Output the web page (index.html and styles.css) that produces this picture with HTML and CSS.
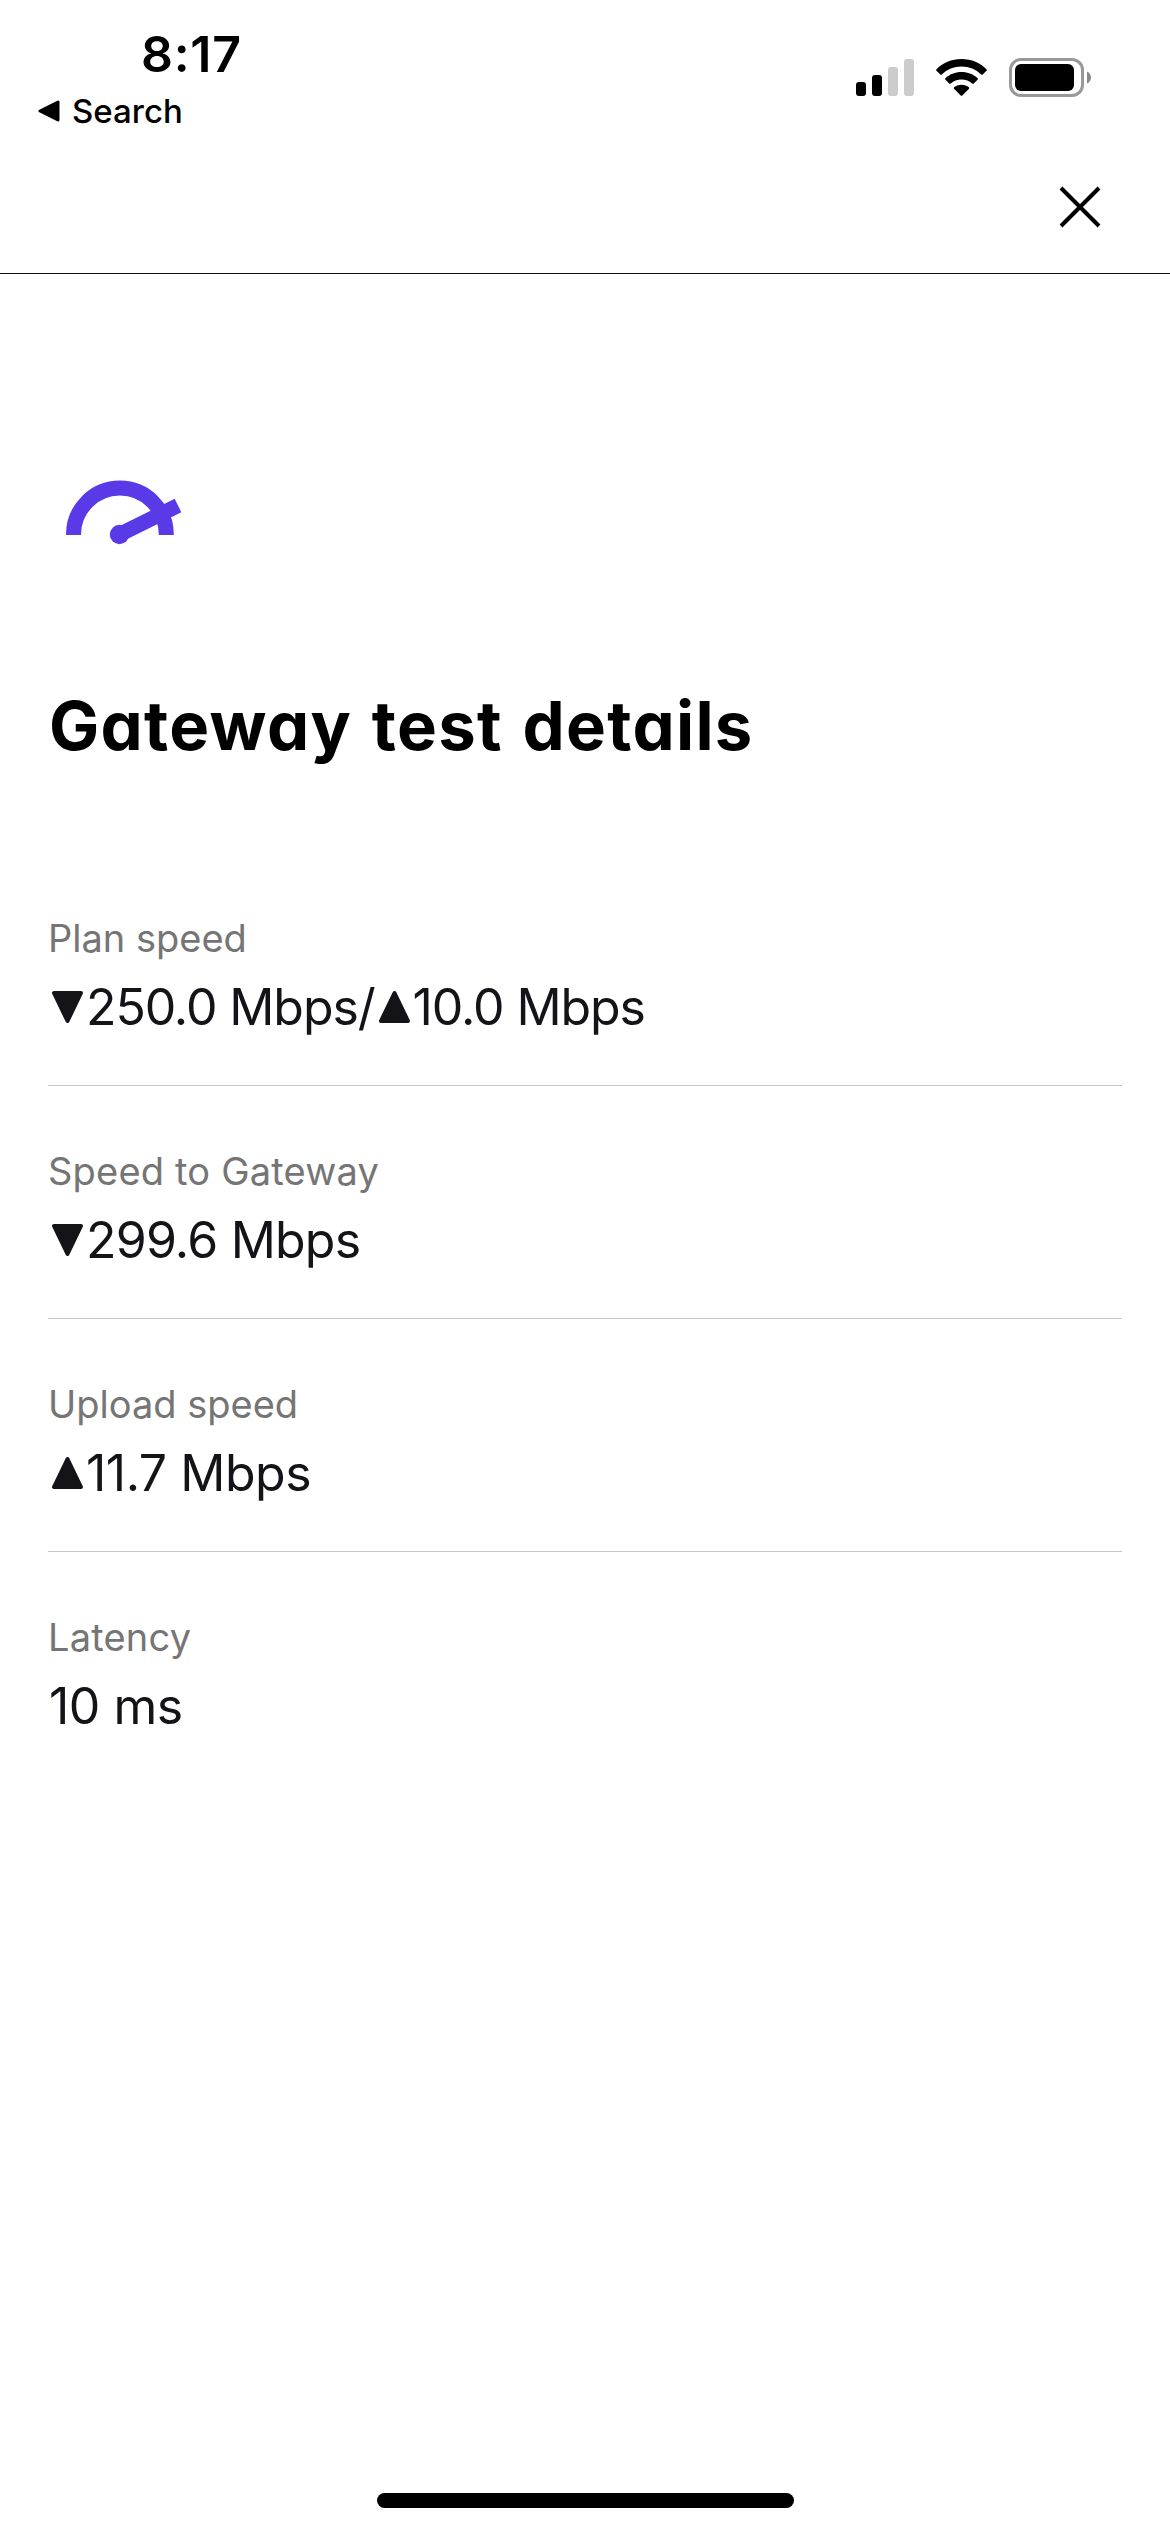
FILE: index.html
```html
<!DOCTYPE html>
<html lang="en">
<head>
<meta charset="utf-8">
<title>Gateway test details</title>
<link rel="stylesheet" href="styles.css">
</head>
<body>
<div class="screen">
  <header class="status">
    <div class="status-left">
      <div class="time">8:17</div>
      <div class="back">
        <svg class="back-arrow" width="22" height="22" viewBox="0 0 22 22"><path d="M2 11 20 2V20Z" stroke="#000" stroke-width="3" stroke-linejoin="round"/></svg>
        <span>Search</span>
      </div>
    </div>
    <div class="status-icons">
      <svg width="58" height="38" viewBox="0 0 58 38"><rect y="23" width="10" height="14" rx="3"/><rect x="16" y="16" width="10" height="21" rx="3"/><g fill="#ccc"><rect x="32" y="8" width="10" height="29" rx="3"/><rect x="48" width="10" height="37" rx="3"/></g></svg>
      <svg width="51" height="38" viewBox="0 0 51 38"><path d="M25.500 0C35.500 0 44.500 4 50.500 10.200Q51.300 11 50.500 11.800L46.700 15.600Q46 16.200 45.200 15.500C40 10.500 33 7.600 25.500 7.600S11 10.500 5.800 15.500Q5 16.200 4.300 15.600L.5 11.800Q-.3 11 .5 10.200C6.500 4 15.500 0 25.500 0Z"/><path d="M25.500 13C32 13 37.500 15.400 41.600 19.200Q42.300 20 41.600 20.700L37.700 24.600Q37 25.200 36.200 24.500C33.400 22 29.700 20.500 25.500 20.500S17.600 22 14.800 24.500Q14 25.200 13.300 24.600L9.400 20.700Q8.700 20 9.400 19.200C13.500 15.400 19 13 25.500 13Z"/><path d="M25.500 25.800C28.500 25.800 31 26.800 32.900 28.300Q33.700 29 33 29.700L26.300 36.500Q25.500 37.200 24.700 36.500L18 29.700Q17.300 29 18.100 28.300C20 26.800 22.500 25.800 25.500 25.800Z"/></svg>
      <svg width="83" height="40" viewBox="0 0 83 40"><rect x="1.500" y="1.500" width="72" height="36" rx="10.500" fill="none" stroke="#999" stroke-width="3"/><rect x="6" y="6" width="59" height="27" rx="6"/><path d="M78 13.500C83.300 15.500 83.300 23.500 78 25.500Z" fill="#888"/></svg>
    </div>
  </header>
  <nav class="topbar">
    <svg width="42" height="42" viewBox="0 0 42 42"><path d="M2 2 40 40M40 2 2 40" fill="none" stroke="#000" stroke-width="4"/></svg>
  </nav>
  <main class="content">
    <svg class="gauge" width="144" height="80" viewBox="48 470 144 80"><g fill="none" stroke="#5a39e6" stroke-width="15"><path d="M73.500 535V534.500A46.200 46.200 0 0 1 166.300 534.500V535"/><path d="M119.500 534.500 178 505.500"/></g><circle cx="119.500" cy="534.500" r="9.700" fill="#5a39e6"/></svg>
    <h1>Gateway test details</h1>
    <dl>
      <div class="item">
        <dt>Plan speed</dt>
        <dd><svg class="tri" viewBox="0 0 31 32"><path d="M2 2H29L15.500 30Z"/></svg><span class="pair">250.0 Mbps/</span><svg class="tri" viewBox="0 0 31 32"><path d="M2 30H29L15.500 2Z"/></svg><span class="pair">10.0 Mbps</span></dd>
      </div>
      <div class="item">
        <dt class="wide">Speed to Gateway</dt>
        <dd><svg class="tri" viewBox="0 0 31 32"><path d="M2 2H29L15.500 30Z"/></svg><span>299.6 Mbps</span></dd>
      </div>
      <div class="item">
        <dt>Upload speed</dt>
        <dd><svg class="tri" viewBox="0 0 31 32"><path d="M2 30H29L15.500 2Z"/></svg><span class="loose">11.7 Mbps</span></dd>
      </div>
      <div class="item">
        <dt class="wide">Latency</dt>
        <dd><span class="plain">10 ms</span></dd>
      </div>
    </dl>
  </main>
  <div class="home"></div>
</div>
</body>
</html>
```
FILE: styles.css
```css
* { box-sizing: border-box; margin: 0; padding: 0; }
body { background: #fff; color: #000; font-family: Inter, "Liberation Sans", sans-serif; }
svg { display: block; flex: none; }
.screen { width: 1170px; height: 2532px; display: flex; flex-direction: column; overflow: hidden; }
.status { height: 144px; display: flex; justify-content: space-between; }
.status-left { padding: 24px 0 0 38px; }
.time { padding-left: 103px; font-size: 50px; line-height: 60px; font-weight: 600; letter-spacing: 0.7px; }
.back { display: flex; align-items: center; gap: 12px; margin-top: 7px; font-size: 33px; line-height: 40px; font-weight: 450; }
.status-icons { display: flex; align-items: flex-start; gap: 22px; padding: 59px 78px 0 0; }
.status-icons svg:last-child { margin-top: -1px; }
.topbar { height: 130px; border-bottom: 1px solid #111; display: flex; justify-content: flex-end; padding: 42px 69px 0 0; }
.content { padding: 196px 48px 0; flex: 1; }
h1 { margin-top: 136px; padding-left: 1px; font-size: 67px; line-height: 80px; font-weight: 700; letter-spacing: 1.3px; word-spacing: 2.5px; white-space: nowrap; font-feature-settings: "cv11"; }
dl { margin-top: 87px; }
.item { height: 233px; padding-top: 60px; border-bottom: 1px solid #c8c8c8; }
.item:last-child { border: 0; }
dt { font-size: 38px; line-height: 50px; color: #757575; }
.wide { letter-spacing: 0.2px; }
dd { display: flex; align-items: center; margin-top: 9px; font-size: 50px; line-height: 70px; letter-spacing: -0.8px; color: #141418; white-space: pre; }
.pair { letter-spacing: -1.1px; }
.loose { letter-spacing: -0.5px; }
.plain { letter-spacing: -0.5px; padding-left: 1px; }
.tri { width: 31px; height: 32px; margin: 0 3px 0 4px; fill: #141418; stroke: #141418; stroke-width: 4; stroke-linejoin: round; }
.home { width: 417px; height: 15px; border-radius: 8px; background: #000; margin: 0 auto 24px; }
```
